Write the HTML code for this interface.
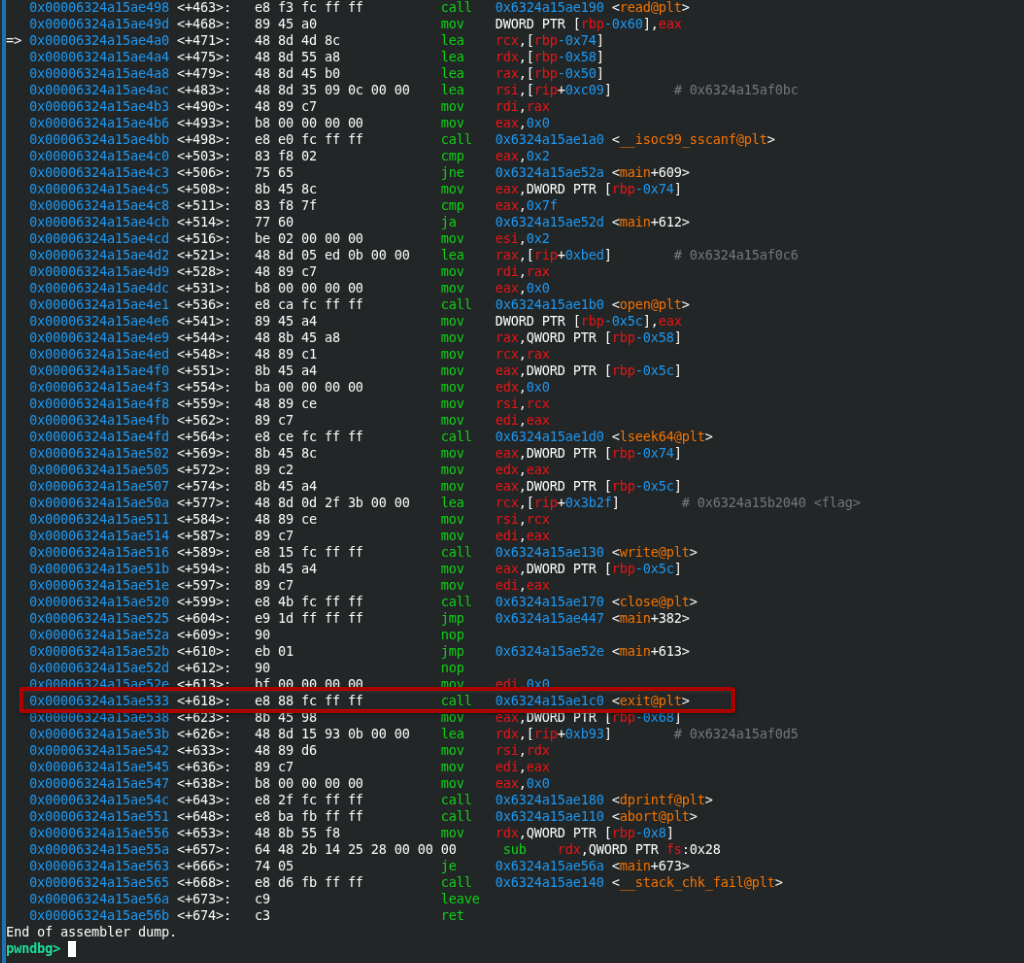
<!DOCTYPE html>
<html><head><meta charset="utf-8"><title>pwndbg</title><style>
html,body{margin:0;padding:0;background:#232627;}
body{width:1024px;height:963px;overflow:hidden;position:relative;}
.edge{position:absolute;left:0;top:0;width:2px;height:963px;background:#2a2d30;}
.bar{position:absolute;left:2px;top:0;width:4px;height:963px;background:#1e71ac;}
.term{position:absolute;left:0;top:0;width:1050px;height:1000px;transform-origin:0 0;transform:translate(6.0px,-0.75px) scale(0.9712);will-change:transform;font-family:"DejaVu Sans Mono","Liberation Mono",monospace;font-size:13.6px;letter-spacing:-0.1879px;color:#fcfcfc;}
.l{position:absolute;left:0;white-space:pre;height:17px;line-height:17px;}
.w{color:#fcfcfc}.b{color:#1d99f3}.g{color:#11d116}.r{color:#ed1515}.o{color:#f67400}.c{color:#74787a}
.p{color:#1cdc9a;font-weight:bold}
.cur{position:absolute;left:68px;top:941px;width:8px;height:16px;background:#fcfcfc;}
.box{position:absolute;left:18.8px;top:686.6px;width:708.3px;height:18.4px;border:4px solid #aa0000;border-radius:2.5px;box-shadow:1px 2px 4px rgba(0,0,0,.35),inset 1px 2px 3px rgba(255,255,255,.04);}
</style></head>
<body>
<div class="edge"></div><div class="bar"></div>
<div class="term">
<div class="l" style="top:0px"><span class="w">   </span><span class="b">0x00006324a15ae498</span><span class="w"> &lt;+463&gt;:</span>   <span class="w">e8 f3 fc ff ff</span>          <span class="g">call</span>   <span class="b">0x6324a15ae190</span> <span class="w">&lt;</span><span class="o">read@plt</span><span class="w">&gt;</span></div>
<div class="l" style="top:17px"><span class="w">   </span><span class="b">0x00006324a15ae49d</span><span class="w"> &lt;+468&gt;:</span>   <span class="w">89 45 a0</span>                <span class="g">mov</span>    <span class="w">DWORD</span><span class="w"> </span><span class="w">PTR</span><span class="w"> </span><span class="w">[</span><span class="r">rbp</span><span class="b">-0x60</span><span class="w">]</span><span class="w">,</span><span class="r">eax</span></div>
<div class="l" style="top:34px"><span class="w">=&gt; </span><span class="b">0x00006324a15ae4a0</span><span class="w"> &lt;+471&gt;:</span>   <span class="w">48 8d 4d 8c</span>             <span class="g">lea</span>    <span class="r">rcx</span><span class="w">,</span><span class="w">[</span><span class="r">rbp</span><span class="b">-0x74</span><span class="w">]</span></div>
<div class="l" style="top:51px"><span class="w">   </span><span class="b">0x00006324a15ae4a4</span><span class="w"> &lt;+475&gt;:</span>   <span class="w">48 8d 55 a8</span>             <span class="g">lea</span>    <span class="r">rdx</span><span class="w">,</span><span class="w">[</span><span class="r">rbp</span><span class="b">-0x58</span><span class="w">]</span></div>
<div class="l" style="top:68px"><span class="w">   </span><span class="b">0x00006324a15ae4a8</span><span class="w"> &lt;+479&gt;:</span>   <span class="w">48 8d 45 b0</span>             <span class="g">lea</span>    <span class="r">rax</span><span class="w">,</span><span class="w">[</span><span class="r">rbp</span><span class="b">-0x50</span><span class="w">]</span></div>
<div class="l" style="top:85px"><span class="w">   </span><span class="b">0x00006324a15ae4ac</span><span class="w"> &lt;+483&gt;:</span>   <span class="w">48 8d 35 09 0c 00 00</span>    <span class="g">lea</span>    <span class="r">rsi</span><span class="w">,</span><span class="w">[</span><span class="r">rip</span><span class="w">+</span><span class="b">0xc09</span><span class="w">]</span>        <span class="c"># 0x6324a15af0bc</span></div>
<div class="l" style="top:102px"><span class="w">   </span><span class="b">0x00006324a15ae4b3</span><span class="w"> &lt;+490&gt;:</span>   <span class="w">48 89 c7</span>                <span class="g">mov</span>    <span class="r">rdi</span><span class="w">,</span><span class="r">rax</span></div>
<div class="l" style="top:119px"><span class="w">   </span><span class="b">0x00006324a15ae4b6</span><span class="w"> &lt;+493&gt;:</span>   <span class="w">b8 00 00 00 00</span>          <span class="g">mov</span>    <span class="r">eax</span><span class="w">,</span><span class="b">0x0</span></div>
<div class="l" style="top:136px"><span class="w">   </span><span class="b">0x00006324a15ae4bb</span><span class="w"> &lt;+498&gt;:</span>   <span class="w">e8 e0 fc ff ff</span>          <span class="g">call</span>   <span class="b">0x6324a15ae1a0</span> <span class="w">&lt;</span><span class="o">__isoc99_sscanf@plt</span><span class="w">&gt;</span></div>
<div class="l" style="top:153px"><span class="w">   </span><span class="b">0x00006324a15ae4c0</span><span class="w"> &lt;+503&gt;:</span>   <span class="w">83 f8 02</span>                <span class="g">cmp</span>    <span class="r">eax</span><span class="w">,</span><span class="b">0x2</span></div>
<div class="l" style="top:170px"><span class="w">   </span><span class="b">0x00006324a15ae4c3</span><span class="w"> &lt;+506&gt;:</span>   <span class="w">75 65</span>                   <span class="g">jne</span>    <span class="b">0x6324a15ae52a</span> <span class="w">&lt;</span><span class="o">main</span><span class="w">+609</span><span class="w">&gt;</span></div>
<div class="l" style="top:187px"><span class="w">   </span><span class="b">0x00006324a15ae4c5</span><span class="w"> &lt;+508&gt;:</span>   <span class="w">8b 45 8c</span>                <span class="g">mov</span>    <span class="r">eax</span><span class="w">,</span><span class="w">DWORD</span><span class="w"> </span><span class="w">PTR</span><span class="w"> </span><span class="w">[</span><span class="r">rbp</span><span class="b">-0x74</span><span class="w">]</span></div>
<div class="l" style="top:204px"><span class="w">   </span><span class="b">0x00006324a15ae4c8</span><span class="w"> &lt;+511&gt;:</span>   <span class="w">83 f8 7f</span>                <span class="g">cmp</span>    <span class="r">eax</span><span class="w">,</span><span class="b">0x7f</span></div>
<div class="l" style="top:221px"><span class="w">   </span><span class="b">0x00006324a15ae4cb</span><span class="w"> &lt;+514&gt;:</span>   <span class="w">77 60</span>                   <span class="g">ja</span>     <span class="b">0x6324a15ae52d</span> <span class="w">&lt;</span><span class="o">main</span><span class="w">+612</span><span class="w">&gt;</span></div>
<div class="l" style="top:238px"><span class="w">   </span><span class="b">0x00006324a15ae4cd</span><span class="w"> &lt;+516&gt;:</span>   <span class="w">be 02 00 00 00</span>          <span class="g">mov</span>    <span class="r">esi</span><span class="w">,</span><span class="b">0x2</span></div>
<div class="l" style="top:255px"><span class="w">   </span><span class="b">0x00006324a15ae4d2</span><span class="w"> &lt;+521&gt;:</span>   <span class="w">48 8d 05 ed 0b 00 00</span>    <span class="g">lea</span>    <span class="r">rax</span><span class="w">,</span><span class="w">[</span><span class="r">rip</span><span class="w">+</span><span class="b">0xbed</span><span class="w">]</span>        <span class="c"># 0x6324a15af0c6</span></div>
<div class="l" style="top:272px"><span class="w">   </span><span class="b">0x00006324a15ae4d9</span><span class="w"> &lt;+528&gt;:</span>   <span class="w">48 89 c7</span>                <span class="g">mov</span>    <span class="r">rdi</span><span class="w">,</span><span class="r">rax</span></div>
<div class="l" style="top:289px"><span class="w">   </span><span class="b">0x00006324a15ae4dc</span><span class="w"> &lt;+531&gt;:</span>   <span class="w">b8 00 00 00 00</span>          <span class="g">mov</span>    <span class="r">eax</span><span class="w">,</span><span class="b">0x0</span></div>
<div class="l" style="top:306px"><span class="w">   </span><span class="b">0x00006324a15ae4e1</span><span class="w"> &lt;+536&gt;:</span>   <span class="w">e8 ca fc ff ff</span>          <span class="g">call</span>   <span class="b">0x6324a15ae1b0</span> <span class="w">&lt;</span><span class="o">open@plt</span><span class="w">&gt;</span></div>
<div class="l" style="top:323px"><span class="w">   </span><span class="b">0x00006324a15ae4e6</span><span class="w"> &lt;+541&gt;:</span>   <span class="w">89 45 a4</span>                <span class="g">mov</span>    <span class="w">DWORD</span><span class="w"> </span><span class="w">PTR</span><span class="w"> </span><span class="w">[</span><span class="r">rbp</span><span class="b">-0x5c</span><span class="w">]</span><span class="w">,</span><span class="r">eax</span></div>
<div class="l" style="top:340px"><span class="w">   </span><span class="b">0x00006324a15ae4e9</span><span class="w"> &lt;+544&gt;:</span>   <span class="w">48 8b 45 a8</span>             <span class="g">mov</span>    <span class="r">rax</span><span class="w">,</span><span class="w">QWORD</span><span class="w"> </span><span class="w">PTR</span><span class="w"> </span><span class="w">[</span><span class="r">rbp</span><span class="b">-0x58</span><span class="w">]</span></div>
<div class="l" style="top:357px"><span class="w">   </span><span class="b">0x00006324a15ae4ed</span><span class="w"> &lt;+548&gt;:</span>   <span class="w">48 89 c1</span>                <span class="g">mov</span>    <span class="r">rcx</span><span class="w">,</span><span class="r">rax</span></div>
<div class="l" style="top:374px"><span class="w">   </span><span class="b">0x00006324a15ae4f0</span><span class="w"> &lt;+551&gt;:</span>   <span class="w">8b 45 a4</span>                <span class="g">mov</span>    <span class="r">eax</span><span class="w">,</span><span class="w">DWORD</span><span class="w"> </span><span class="w">PTR</span><span class="w"> </span><span class="w">[</span><span class="r">rbp</span><span class="b">-0x5c</span><span class="w">]</span></div>
<div class="l" style="top:391px"><span class="w">   </span><span class="b">0x00006324a15ae4f3</span><span class="w"> &lt;+554&gt;:</span>   <span class="w">ba 00 00 00 00</span>          <span class="g">mov</span>    <span class="r">edx</span><span class="w">,</span><span class="b">0x0</span></div>
<div class="l" style="top:408px"><span class="w">   </span><span class="b">0x00006324a15ae4f8</span><span class="w"> &lt;+559&gt;:</span>   <span class="w">48 89 ce</span>                <span class="g">mov</span>    <span class="r">rsi</span><span class="w">,</span><span class="r">rcx</span></div>
<div class="l" style="top:425px"><span class="w">   </span><span class="b">0x00006324a15ae4fb</span><span class="w"> &lt;+562&gt;:</span>   <span class="w">89 c7</span>                   <span class="g">mov</span>    <span class="r">edi</span><span class="w">,</span><span class="r">eax</span></div>
<div class="l" style="top:442px"><span class="w">   </span><span class="b">0x00006324a15ae4fd</span><span class="w"> &lt;+564&gt;:</span>   <span class="w">e8 ce fc ff ff</span>          <span class="g">call</span>   <span class="b">0x6324a15ae1d0</span> <span class="w">&lt;</span><span class="o">lseek64@plt</span><span class="w">&gt;</span></div>
<div class="l" style="top:459px"><span class="w">   </span><span class="b">0x00006324a15ae502</span><span class="w"> &lt;+569&gt;:</span>   <span class="w">8b 45 8c</span>                <span class="g">mov</span>    <span class="r">eax</span><span class="w">,</span><span class="w">DWORD</span><span class="w"> </span><span class="w">PTR</span><span class="w"> </span><span class="w">[</span><span class="r">rbp</span><span class="b">-0x74</span><span class="w">]</span></div>
<div class="l" style="top:476px"><span class="w">   </span><span class="b">0x00006324a15ae505</span><span class="w"> &lt;+572&gt;:</span>   <span class="w">89 c2</span>                   <span class="g">mov</span>    <span class="r">edx</span><span class="w">,</span><span class="r">eax</span></div>
<div class="l" style="top:493px"><span class="w">   </span><span class="b">0x00006324a15ae507</span><span class="w"> &lt;+574&gt;:</span>   <span class="w">8b 45 a4</span>                <span class="g">mov</span>    <span class="r">eax</span><span class="w">,</span><span class="w">DWORD</span><span class="w"> </span><span class="w">PTR</span><span class="w"> </span><span class="w">[</span><span class="r">rbp</span><span class="b">-0x5c</span><span class="w">]</span></div>
<div class="l" style="top:510px"><span class="w">   </span><span class="b">0x00006324a15ae50a</span><span class="w"> &lt;+577&gt;:</span>   <span class="w">48 8d 0d 2f 3b 00 00</span>    <span class="g">lea</span>    <span class="r">rcx</span><span class="w">,</span><span class="w">[</span><span class="r">rip</span><span class="w">+</span><span class="b">0x3b2f</span><span class="w">]</span>        <span class="c"># 0x6324a15b2040 &lt;flag&gt;</span></div>
<div class="l" style="top:527px"><span class="w">   </span><span class="b">0x00006324a15ae511</span><span class="w"> &lt;+584&gt;:</span>   <span class="w">48 89 ce</span>                <span class="g">mov</span>    <span class="r">rsi</span><span class="w">,</span><span class="r">rcx</span></div>
<div class="l" style="top:544px"><span class="w">   </span><span class="b">0x00006324a15ae514</span><span class="w"> &lt;+587&gt;:</span>   <span class="w">89 c7</span>                   <span class="g">mov</span>    <span class="r">edi</span><span class="w">,</span><span class="r">eax</span></div>
<div class="l" style="top:561px"><span class="w">   </span><span class="b">0x00006324a15ae516</span><span class="w"> &lt;+589&gt;:</span>   <span class="w">e8 15 fc ff ff</span>          <span class="g">call</span>   <span class="b">0x6324a15ae130</span> <span class="w">&lt;</span><span class="o">write@plt</span><span class="w">&gt;</span></div>
<div class="l" style="top:578px"><span class="w">   </span><span class="b">0x00006324a15ae51b</span><span class="w"> &lt;+594&gt;:</span>   <span class="w">8b 45 a4</span>                <span class="g">mov</span>    <span class="r">eax</span><span class="w">,</span><span class="w">DWORD</span><span class="w"> </span><span class="w">PTR</span><span class="w"> </span><span class="w">[</span><span class="r">rbp</span><span class="b">-0x5c</span><span class="w">]</span></div>
<div class="l" style="top:595px"><span class="w">   </span><span class="b">0x00006324a15ae51e</span><span class="w"> &lt;+597&gt;:</span>   <span class="w">89 c7</span>                   <span class="g">mov</span>    <span class="r">edi</span><span class="w">,</span><span class="r">eax</span></div>
<div class="l" style="top:612px"><span class="w">   </span><span class="b">0x00006324a15ae520</span><span class="w"> &lt;+599&gt;:</span>   <span class="w">e8 4b fc ff ff</span>          <span class="g">call</span>   <span class="b">0x6324a15ae170</span> <span class="w">&lt;</span><span class="o">close@plt</span><span class="w">&gt;</span></div>
<div class="l" style="top:629px"><span class="w">   </span><span class="b">0x00006324a15ae525</span><span class="w"> &lt;+604&gt;:</span>   <span class="w">e9 1d ff ff ff</span>          <span class="g">jmp</span>    <span class="b">0x6324a15ae447</span> <span class="w">&lt;</span><span class="o">main</span><span class="w">+382</span><span class="w">&gt;</span></div>
<div class="l" style="top:646px"><span class="w">   </span><span class="b">0x00006324a15ae52a</span><span class="w"> &lt;+609&gt;:</span>   <span class="w">90</span>                      <span class="g">nop</span></div>
<div class="l" style="top:663px"><span class="w">   </span><span class="b">0x00006324a15ae52b</span><span class="w"> &lt;+610&gt;:</span>   <span class="w">eb 01</span>                   <span class="g">jmp</span>    <span class="b">0x6324a15ae52e</span> <span class="w">&lt;</span><span class="o">main</span><span class="w">+613</span><span class="w">&gt;</span></div>
<div class="l" style="top:680px"><span class="w">   </span><span class="b">0x00006324a15ae52d</span><span class="w"> &lt;+612&gt;:</span>   <span class="w">90</span>                      <span class="g">nop</span></div>
<div class="l" style="top:697px"><span class="w">   </span><span class="b">0x00006324a15ae52e</span><span class="w"> &lt;+613&gt;:</span>   <span class="w">bf 00 00 00 00</span>          <span class="g">mov</span>    <span class="r">edi</span><span class="w">,</span><span class="b">0x0</span></div>
<div class="l" style="top:714px"><span class="w">   </span><span class="b">0x00006324a15ae533</span><span class="w"> &lt;+618&gt;:</span>   <span class="w">e8 88 fc ff ff</span>          <span class="g">call</span>   <span class="b">0x6324a15ae1c0</span> <span class="w">&lt;</span><span class="o">exit@plt</span><span class="w">&gt;</span></div>
<div class="l" style="top:731px"><span class="w">   </span><span class="b">0x00006324a15ae538</span><span class="w"> &lt;+623&gt;:</span>   <span class="w">8b 45 98</span>                <span class="g">mov</span>    <span class="r">eax</span><span class="w">,</span><span class="w">DWORD</span><span class="w"> </span><span class="w">PTR</span><span class="w"> </span><span class="w">[</span><span class="r">rbp</span><span class="b">-0x68</span><span class="w">]</span></div>
<div class="l" style="top:748px"><span class="w">   </span><span class="b">0x00006324a15ae53b</span><span class="w"> &lt;+626&gt;:</span>   <span class="w">48 8d 15 93 0b 00 00</span>    <span class="g">lea</span>    <span class="r">rdx</span><span class="w">,</span><span class="w">[</span><span class="r">rip</span><span class="w">+</span><span class="b">0xb93</span><span class="w">]</span>        <span class="c"># 0x6324a15af0d5</span></div>
<div class="l" style="top:765px"><span class="w">   </span><span class="b">0x00006324a15ae542</span><span class="w"> &lt;+633&gt;:</span>   <span class="w">48 89 d6</span>                <span class="g">mov</span>    <span class="r">rsi</span><span class="w">,</span><span class="r">rdx</span></div>
<div class="l" style="top:782px"><span class="w">   </span><span class="b">0x00006324a15ae545</span><span class="w"> &lt;+636&gt;:</span>   <span class="w">89 c7</span>                   <span class="g">mov</span>    <span class="r">edi</span><span class="w">,</span><span class="r">eax</span></div>
<div class="l" style="top:799px"><span class="w">   </span><span class="b">0x00006324a15ae547</span><span class="w"> &lt;+638&gt;:</span>   <span class="w">b8 00 00 00 00</span>          <span class="g">mov</span>    <span class="r">eax</span><span class="w">,</span><span class="b">0x0</span></div>
<div class="l" style="top:816px"><span class="w">   </span><span class="b">0x00006324a15ae54c</span><span class="w"> &lt;+643&gt;:</span>   <span class="w">e8 2f fc ff ff</span>          <span class="g">call</span>   <span class="b">0x6324a15ae180</span> <span class="w">&lt;</span><span class="o">dprintf@plt</span><span class="w">&gt;</span></div>
<div class="l" style="top:833px"><span class="w">   </span><span class="b">0x00006324a15ae551</span><span class="w"> &lt;+648&gt;:</span>   <span class="w">e8 ba fb ff ff</span>          <span class="g">call</span>   <span class="b">0x6324a15ae110</span> <span class="w">&lt;</span><span class="o">abort@plt</span><span class="w">&gt;</span></div>
<div class="l" style="top:850px"><span class="w">   </span><span class="b">0x00006324a15ae556</span><span class="w"> &lt;+653&gt;:</span>   <span class="w">48 8b 55 f8</span>             <span class="g">mov</span>    <span class="r">rdx</span><span class="w">,</span><span class="w">QWORD</span><span class="w"> </span><span class="w">PTR</span><span class="w"> </span><span class="w">[</span><span class="r">rbp</span><span class="b">-0x8</span><span class="w">]</span></div>
<div class="l" style="top:867px"><span class="w">   </span><span class="b">0x00006324a15ae55a</span><span class="w"> &lt;+657&gt;:</span>   <span class="w">64 48 2b 14 25 28 00 00 00</span>      <span class="g">sub</span>    <span class="r">rdx</span><span class="w">,</span><span class="w">QWORD</span><span class="w"> </span><span class="w">PTR</span><span class="w"> </span><span class="r">fs</span><span class="w">:</span><span class="w">0x28</span></div>
<div class="l" style="top:884px"><span class="w">   </span><span class="b">0x00006324a15ae563</span><span class="w"> &lt;+666&gt;:</span>   <span class="w">74 05</span>                   <span class="g">je</span>     <span class="b">0x6324a15ae56a</span> <span class="w">&lt;</span><span class="o">main</span><span class="w">+673</span><span class="w">&gt;</span></div>
<div class="l" style="top:901px"><span class="w">   </span><span class="b">0x00006324a15ae565</span><span class="w"> &lt;+668&gt;:</span>   <span class="w">e8 d6 fb ff ff</span>          <span class="g">call</span>   <span class="b">0x6324a15ae140</span> <span class="w">&lt;</span><span class="o">__stack_chk_fail@plt</span><span class="w">&gt;</span></div>
<div class="l" style="top:918px"><span class="w">   </span><span class="b">0x00006324a15ae56a</span><span class="w"> &lt;+673&gt;:</span>   <span class="w">c9</span>                      <span class="g">leave</span></div>
<div class="l" style="top:935px"><span class="w">   </span><span class="b">0x00006324a15ae56b</span><span class="w"> &lt;+674&gt;:</span>   <span class="w">c3</span>                      <span class="g">ret</span></div>
<div class="l" style="top:952px"><span class="w">End of assembler dump.</span></div>
<div class="l" style="top:969px"><span class="p">pwndbg&gt;</span> </div>
</div>
<div class="cur"></div>
<div class="box"></div>
</body></html>
